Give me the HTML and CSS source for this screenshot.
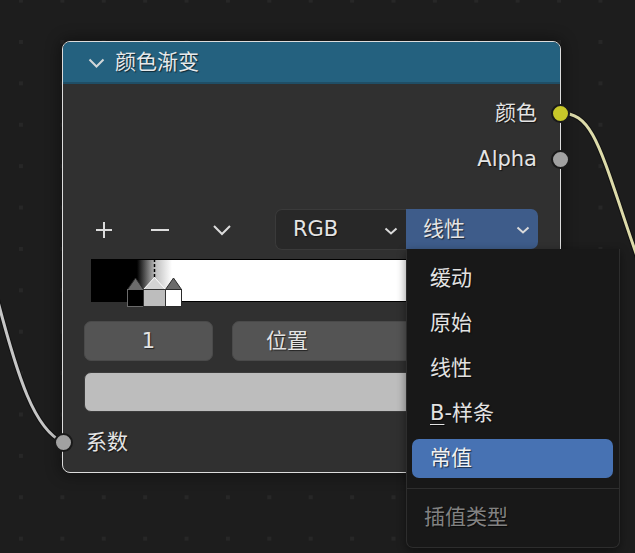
FILE: index.html
```html
<!DOCTYPE html>
<html lang="zh">
<head>
<meta charset="utf-8">
<title>颜色渐变</title>
<link rel="stylesheet" href="styles.css">
</head>
<body>
<div class="editor">
  <svg class="wires" width="635" height="553" viewBox="0 0 635 553">
    <path class="wire-edge" d="M560 113 C595 113 600 150 640 265"/>
    <path class="wire-out" d="M560 113 C595 113 600 150 640 265"/>
    <path class="wire-edge" d="M63 442 C35 430 18 380 -5 290"/>
    <path class="wire-in" d="M63 442 C35 430 18 380 -5 290"/>
  </svg>

  <div class="node">
    <div class="node-header">
      <svg class="hdr-chevron" width="17" height="10" viewBox="0 0 17 10"><polyline points="1.5,1.5 8.5,8.5 15.5,1.5"/></svg>
      <span class="node-title">颜色渐变</span>
    </div>
    <div class="node-body">
      <div class="socket-row out">
        <span class="label">颜色</span>
        <span class="socket out-socket yellow"></span>
      </div>
      <div class="socket-row out">
        <span class="label">Alpha</span>
        <span class="socket out-socket gray"></span>
      </div>

      <div class="toolbar">
        <span class="icon-btn"><svg width="18" height="18" viewBox="0 0 18 18"><path d="M9 1v16M1 9h16"/></svg></span>
        <span class="icon-btn minus"><svg width="20" height="18" viewBox="0 0 20 18"><path d="M1 9h18"/></svg></span>
        <span class="icon-btn chev"><svg width="20" height="12" viewBox="0 0 20 12"><polyline points="2,2 10,10 18,2"/></svg></span>
        <div class="dropdown dark">
          <span class="dd-text">RGB</span>
          <svg class="dd-chev" width="14" height="8" viewBox="0 0 14 8"><polyline points="1.5,1.5 7,6.5 12.5,1.5"/></svg>
        </div>
        <div class="dropdown blue">
          <span class="dd-text">线性</span>
          <svg class="dd-chev" width="14" height="8" viewBox="0 0 14 8"><polyline points="1.5,1.5 7,6.5 12.5,1.5"/></svg>
        </div>
      </div>

      <div class="ramp">
        <svg class="stops" width="100" height="50" viewBox="0 0 100 50">
          <line class="cursor" x1="63.5" y1="0" x2="63.5" y2="19"/>
          <g transform="translate(36 18)">
            <path class="roof dim" d="M0.5 12.5 L8.5 1 L16.5 12.5 Z"/>
            <rect class="body blk" x="0.5" y="12.5" width="16" height="17"/>
            <path class="roof dim" d="M38.5 12.5 L46.5 1 L54.5 12.5 Z"/>
            <rect class="body wht" x="38.5" y="12.5" width="16" height="17"/>
            <path class="roof act" d="M16.5 12.5 L27.5 0.5 L38.5 12.5 Z"/>
            <rect class="body act" x="16.5" y="12.5" width="22" height="17"/>
          </g>
        </svg>
      </div>

      <div class="fields">
        <div class="field num">1</div>
        <div class="field pos">位置</div>
      </div>

      <div class="color-field"></div>

      <div class="socket-row in">
        <span class="socket in-socket gray"></span>
        <span class="label">系数</span>
      </div>
    </div>
  </div>

  <div class="menu">
    <div class="menu-item"><span class="mi-inner">缓动</span></div>
    <div class="menu-item"><span class="mi-inner">原始</span></div>
    <div class="menu-item"><span class="mi-inner">线性</span></div>
    <div class="menu-item"><span class="mi-inner"><u>B</u>-样条</span></div>
    <div class="menu-item"><span class="mi-inner active">常值</span></div>
    <div class="menu-sep"></div>
    <div class="menu-title">插值类型</div>
  </div>
</div>
</body>
</html>
```

FILE: styles.css
```css
* { box-sizing: border-box; }

html, body {
  margin: 0;
  padding: 0;
}

body {
  width: 635px;
  height: 553px;
  overflow: hidden;
  background-color: #1d1d1d;
  font-family: "DejaVu Sans", "Noto Sans CJK SC", sans-serif;
  font-size: 21px;
  color: #e4e4e4;
}

.editor {
  position: relative;
  width: 635px;
  height: 553px;
  background-color: #1d1d1d;
  background-image: conic-gradient(from 270deg at 4px 4px, #272727 25%, transparent 0);
  background-size: 41.4px 41.4px;
  background-position: 19px 40px;
}

.wires {
  position: absolute;
  left: 0;
  top: 0;
}
.wires path { fill: none; }
.wire-edge { stroke: #121212; stroke-width: 5; }
.wire-out { stroke: #dddbaa; stroke-width: 3; }
.wire-in { stroke: #c6c6c6; stroke-width: 3; }

/* ---------- node ---------- */
.node {
  position: absolute;
  left: 62px;
  top: 41px;
  width: 499px;
  height: 432px;
  border: 1px solid #dcdcdc;
  border-radius: 8px;
  background: #303030;
  box-shadow: 0 0 14px 3px rgba(0, 0, 0, 0.35);
  text-shadow: 1px 1px 1px rgba(0, 0, 0, 0.6);
}

.node-header {
  height: 42px;
  background: #24617f;
  border-bottom: 2px solid #1f4e66;
  border-radius: 7px 7px 0 0;
  display: flex;
  align-items: center;
  padding-left: 25px;
}
.hdr-chevron { margin-right: 10px; margin-top: 2px; }
.hdr-chevron polyline { fill: none; stroke: #d2d6d8; stroke-width: 2; }
.node-title { color: #e8eaec; line-height: 1; }

.node-body {
  padding: 6px 22px 7px 21px;
}

.socket-row {
  position: relative;
  height: 46px;
  display: flex;
  align-items: center;
}
.socket-row.out { justify-content: flex-end; padding-right: 1px; }
.socket-row.in { padding-left: 2px; margin-top: 7px; }
.label { line-height: 1; }

.socket {
  position: absolute;
  top: 50%;
  width: 19px;
  height: 19px;
  margin-top: -9.5px;
  border-radius: 50%;
  border: 2px solid #1a1a1a;
}
.out-socket { right: -31.5px; }
.in-socket { left: -30.5px; }
.socket.yellow { background: #c7c729; }
.socket.gray { background: #a1a1a1; }

/* ---------- toolbar ---------- */
.toolbar {
  margin-top: 27px;
  height: 41px;
  display: flex;
  align-items: center;
}
.icon-btn {
  width: 40px;
  height: 41px;
  display: flex;
  align-items: center;
  justify-content: center;
}
.icon-btn.minus { margin-left: 16px; }
.icon-btn.chev { margin-left: 22px; }
.icon-btn path, .icon-btn polyline { fill: none; stroke: #dcdcdc; stroke-width: 2; }

.dropdown {
  position: relative;
  height: 41px;
  display: flex;
  align-items: center;
}
.dropdown.dark {
  margin-left: 33px;
  width: 131px;
  background: #282828;
  border: 1px solid #3a3a3a;
  border-right: none;
  border-radius: 7px 0 0 7px;
  padding-left: 17px;
}
.dropdown.blue {
  width: 132px;
  height: 40px;
  align-self: flex-start;
  background: #3e5c8a;
  border-radius: 0 7px 7px 0;
  padding-left: 17px;
}
.dd-text { line-height: 1; }
.dd-chev { position: absolute; right: 8px; top: 17px; }
.dd-chev polyline { fill: none; stroke: #dadada; stroke-width: 2; }

/* ---------- ramp ---------- */
.ramp {
  position: relative;
  margin: 9px 7px 0 7px;
  height: 43px;
  border: 1px solid #000;
  background: linear-gradient(to right, #000 0, #000 45px, #bdbdbd 63px, #fff 80px, #fff 100%);
}
.stops {
  position: absolute;
  left: -1px;
  top: -1px;
  overflow: visible;
}
.cursor { stroke: #000; stroke-width: 1.5; stroke-dasharray: 3 2; }
.roof.dim { fill: #6b6b6b; stroke: #2a2a2a; stroke-width: 1; }
.body.blk { fill: #000; stroke: #6a6a6a; stroke-width: 1; }
.body.wht { fill: #fff; stroke: #2a2a2a; stroke-width: 1; }
.roof.act { fill: #d4d4d4; stroke: #fff; stroke-width: 1; }
.body.act { fill: #bdbdbd; stroke: #333; stroke-width: 1; }

/* ---------- fields ---------- */
.fields {
  margin-top: 19px;
  display: flex;
  height: 40px;
}
.field {
  height: 40px;
  background: #545454;
  border: 1px solid #4a4a4a;
  border-radius: 7px;
  display: flex;
  align-items: center;
  line-height: 1;
}
.field.num { width: 129px; justify-content: center; }
.field.pos { flex: 1; margin-left: 19px; padding-left: 33px; }

.color-field {
  margin-top: 11px;
  height: 40px;
  background: #bdbdbd;
  border: 1px solid #3c3c3c;
  border-radius: 7px;
}

/* ---------- menu ---------- */
.menu {
  position: absolute;
  left: 406px;
  top: 249px;
  width: 214px;
  height: 299px;
  background: #181818;
  border: 1px solid #2d2d2d;
  border-top: none;
  border-radius: 0 0 7px 7px;
  padding-top: 7px;
  box-shadow: 0 3px 10px rgba(0, 0, 0, 0.45);
  text-shadow: 1px 1px 1px rgba(0, 0, 0, 0.6);
}
.menu-item {
  height: 45px;
  padding: 3px 6px 3px 5px;
}
.mi-inner {
  height: 39px;
  display: flex;
  align-items: center;
  padding-left: 18px;
  border-radius: 7px;
  line-height: 1;
  color: #e2e2e2;
}
.mi-inner u { text-underline-offset: 4px; text-decoration-thickness: 1px; }
.mi-inner.active { background: #4772b3; color: #f2f2f2; }
.menu-sep {
  margin-top: 7px;
  height: 1px;
  background: #2e2e2e;
}
.menu-title {
  height: 56px;
  display: flex;
  align-items: center;
  padding-left: 17px;
  color: #828282;
  line-height: 1;
}
```
